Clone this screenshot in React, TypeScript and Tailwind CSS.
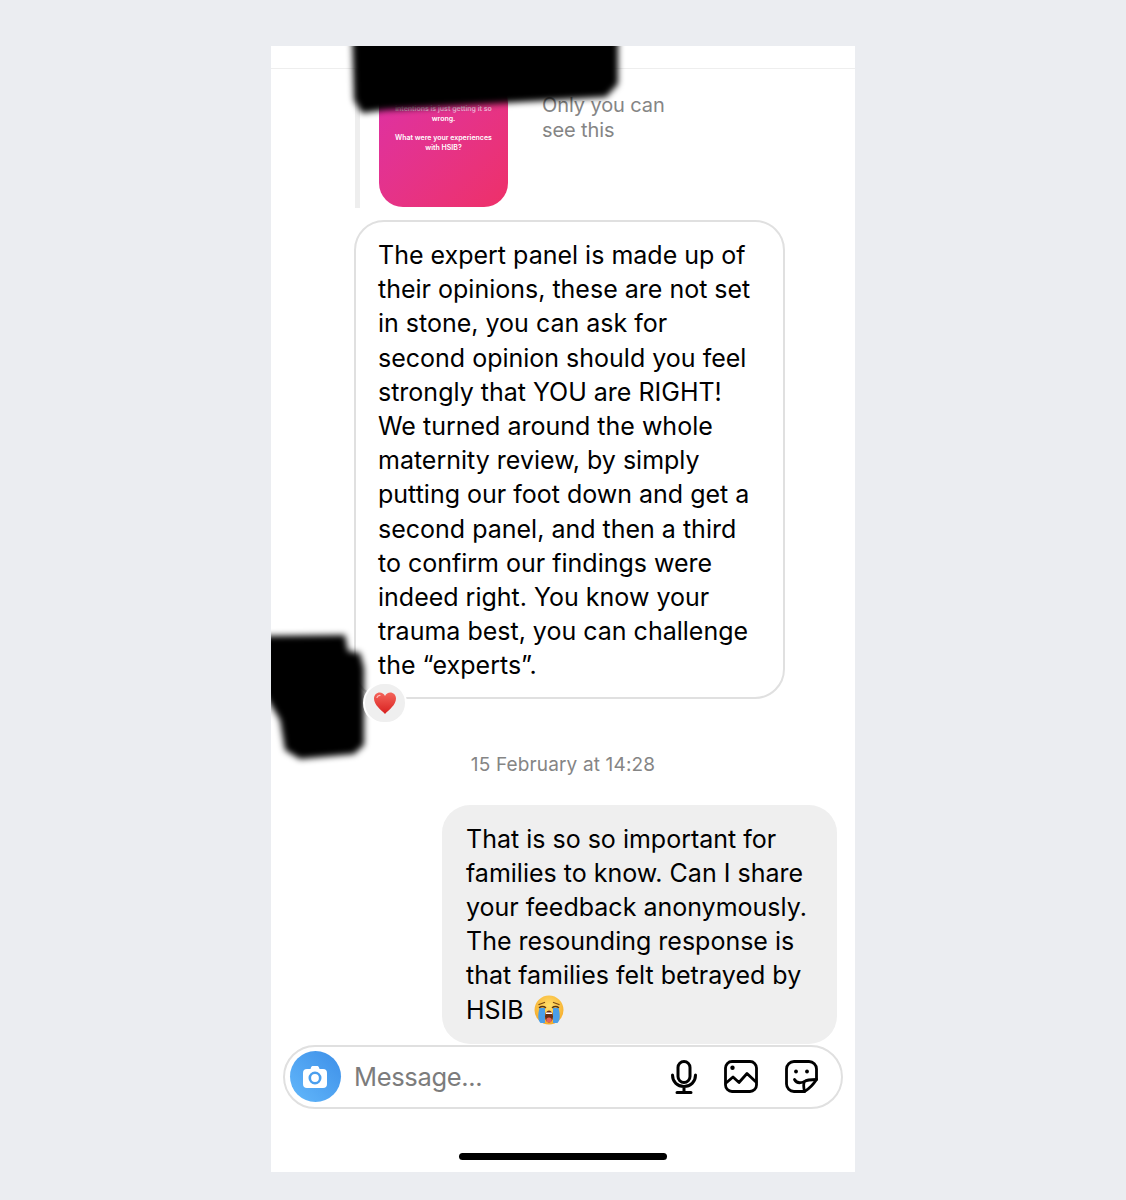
import React from "react";

const left = [
  "The expert panel is made up of",
  "their opinions, these are not set",
  "in stone, you can ask for",
  "second opinion should you feel",
  "strongly that YOU are RIGHT!",
  "We turned around the whole",
  "maternity review, by simply",
  "putting our foot down and get a",
  "second panel, and then a third",
  "to confirm our findings were",
  "indeed right. You know your",
  "trauma best, you can challenge",
  "the “experts”.",
];
const right = [
  "That is so so important for",
  "families to know. Can I share",
  "your feedback anonymously.",
  "The resounding response is",
  "that families felt betrayed by",
];

function Heart() {
  return (
    <svg width="24" height="24" viewBox="0 0 24 24">
      <defs>
        <linearGradient id="h" x1="0" y1="0" x2="0" y2="1">
          <stop offset="0" stopColor="#f4645a" />
          <stop offset="1" stopColor="#d8201f" />
        </linearGradient>
      </defs>
      <path d="M12 23C8 19 1 14 1 7.6 1 3.8 3.8 1.5 6.7 1.5 9 1.5 11 2.8 12 5c1-2.200 3-3.500 5.300-3.500C20.200 1.500 23 3.800 23 7.600 23 14 16 19 12 23Z" fill="url(#h)" />
      <path d="M4 6.500C4.500 5 5.800 4.200 7 4.300" stroke="#fbb" strokeWidth="1.200" fill="none" strokeLinecap="round" />
    </svg>
  );
}

function Crying() {
  return (
    <svg width="30" height="30" viewBox="0 0 30 30" className="inline-block align-[-6px] ml-[10px]">
      <defs>
        <radialGradient id="f" cx="0.5" cy="0.35" r="0.7">
          <stop offset="0" stopColor="#ffdf6b" />
          <stop offset="1" stopColor="#f5a623" />
        </radialGradient>
      </defs>
      <circle cx="15" cy="15" r="14.500" fill="url(#f)" />
      <path d="M5 9.500 10.500 7.500M25 9.500 19.500 7.500" stroke="#7a4a12" strokeWidth="1.300" strokeLinecap="round" />
      <path d="M5.500 12.500C7 11 10 11 11.500 12.500M18.500 12.500C20 11 23 11 24.500 12.500" stroke="#5a3510" strokeWidth="1.500" fill="none" strokeLinecap="round" />
      <path d="M5.500 13H11V28H6.500C4 26 3.500 20 5.500 13ZM19 13H24.500C26.500 20 26 26 23.500 28H19Z" fill="#4a9ee8" />
      <ellipse cx="15" cy="21.500" rx="4" ry="6" fill="#6b2d12" />
      <ellipse cx="15" cy="25" rx="2.800" ry="2.500" fill="#e8645a" />
      <path d="M12 17.500H18V19H12Z" fill="#fff" />
    </svg>
  );
}

function Camera() {
  return (
    <svg width="26" height="24" viewBox="0 0 26 24" className="mr-[2px]">
      <path d="M9 2.500C9.500 1.300 10.200 1 11 1h4c.8 0 1.500.3 2 1.500L17.500 4H21a4 4 0 0 1 4 4v11a4 4 0 0 1-4 4H5a4 4 0 0 1-4-4V8a4 4 0 0 1 4-4h3.500Z" fill="#fff" />
      <circle cx="13" cy="13" r="5.200" fill="none" stroke="#4b9fee" strokeWidth="2.600" />
    </svg>
  );
}

function Mic() {
  return (
    <svg width="26" height="34" viewBox="0 0 26 34" fill="none" stroke="#000" strokeWidth="3" strokeLinecap="round">
      <rect x="7" y="1.500" width="12" height="21" rx="6" />
      <path d="M1.500 15C1.500 22 6.500 26.500 13 26.500S24.500 22 24.500 15M13 26.500V32.500M6 32.500H20" />
    </svg>
  );
}

function ImageIcon() {
  return (
    <svg width="34" height="33" viewBox="0 0 34 33" fill="none" stroke="#000" strokeWidth="2.800" strokeLinecap="round" strokeLinejoin="round">
      <rect x="1.500" y="1.500" width="31" height="30" rx="6.500" />
      <path d="M2 23 9 17 15 22.500 23 13.500 32 22" />
      <circle cx="8.500" cy="7.800" r="2.200" fill="#000" stroke="none" />
    </svg>
  );
}

function Sticker() {
  return (
    <svg width="33" height="33" viewBox="0 0 33 33" fill="none" stroke="#000" strokeWidth="2.800" strokeLinecap="round" strokeLinejoin="round">
      <path d="M19.500 31.500H9A7.500 7.500 0 0 1 1.500 24V9A7.500 7.500 0 0 1 9 1.500H24A7.500 7.500 0 0 1 31.500 9V19.500C28 25 24.500 28.500 19.500 31.500Z" />
      <path d="M19.500 31.500C18.500 27 18 24 19.500 21.500 22 19.500 27 19.500 31.500 19.500" />
      <path d="M9.500 19.500C11 22.500 14 23.500 18.500 22" />
      <circle cx="11" cy="11.500" r="1.900" fill="#000" stroke="none" />
      <circle cx="22" cy="11.500" r="1.900" fill="#000" stroke="none" />
    </svg>
  );
}

export default function App() {
  return (
    <div className="min-h-[1200px] bg-[#ebedf1] pt-[46px] font-['Inter','Liberation_Sans',sans-serif] text-black">
      <div className="relative ml-[271px] flex h-[1126px] w-[584px] flex-col overflow-hidden bg-white">
        <div className="h-[23px] shrink-0 border-b border-[#eeeeee]" />

        <div className="ml-[84px] flex h-[139px] shrink-0">
          <div className="h-full w-[5px] bg-[#eeeeee]" />
          <div className="ml-[19px] mt-[10px] flex h-[128px] w-[129px] flex-col items-center rounded-[24px] bg-gradient-to-br from-[#dd30a6] to-[#ee3068] pt-[25px] text-center text-[7px] font-semibold leading-[9.500px] text-white">
            <span className="whitespace-nowrap text-[#f3b6d9]">intentions is just getting it so</span>
            <span>wrong.</span>
            <span className="mt-[10px] whitespace-nowrap">What were your experiences</span>
            <span>with HSIB?</span>
          </div>
          <div className="ml-[34px] mt-[24px] text-[20px] leading-[25px] tracking-[-0.1px] text-[#858585]">
            Only you can
            <br />
            see this
          </div>
        </div>

        <div className="relative ml-[83px] mt-[12px] w-[431px] rounded-[30px] border-2 border-[#e0e0e0] px-[22px] pb-[14px] pt-[16px] text-[25px] leading-[34.200px]">
          {left.map((l) => (
            <div key={l} className="whitespace-nowrap">{l}</div>
          ))}
          <div className="absolute left-[7px] top-[460px] z-10 flex h-[42px] w-[44px] items-center justify-center rounded-full border-2 border-white bg-[#efefef]">
            <Heart />
          </div>
        </div>

        <div className="mt-[54px] text-center text-[19px] leading-[24px] tracking-[0.15px] text-[#858585]">
          15 February at 14:28
        </div>

        <div className="ml-[171px] mt-[28px] w-[395px] rounded-[28px] bg-[#efefef] px-[24px] py-[17px] text-[25px] leading-[34.200px]">
          {right.map((l) => (
            <div key={l} className="whitespace-nowrap">{l}</div>
          ))}
          <div className="whitespace-nowrap">HSIB<Crying /></div>
        </div>

        <div className="mx-[12px] mt-px flex h-[64px] shrink-0 items-center rounded-full border-2 border-[#e0e0e0] bg-white pl-[5px] pr-[23px]">
          <div className="flex h-[51px] w-[51px] shrink-0 items-center justify-center rounded-full bg-gradient-to-bl from-[#3d8fe8] to-[#63b8fb]">
            <Camera />
          </div>
          <span className="ml-[13px] text-[25.500px] tracking-[-0.35px] text-[#7c7c7c]">Message...</span>
          <div className="ml-auto flex items-center gap-[27px]">
            <Mic />
            <ImageIcon />
            <Sticker />
          </div>
        </div>

        <div className="mx-auto mt-[44px] h-[7px] w-[208px] rounded-full bg-black" />

        <svg className="absolute left-0 top-0" width="584" height="1126" viewBox="271 46 584 1126" fill="#000">
          <defs>
            <filter id="b1" x="-10%" y="-10%" width="120%" height="120%">
              <feGaussianBlur stdDeviation="3" />
            </filter>
          </defs>
          <path filter="url(#b1)" d="M352 30H618V84L606 97 540 101 470 105 385 110 362 113 354 100Z" />
          <path filter="url(#b1)" d="M262 636 345 635 348 651 360 653 364 668 364 745 354 754 300 759 285 750 280 720 262 690Z" />
        </svg>
      </div>
    </div>
  );
}
